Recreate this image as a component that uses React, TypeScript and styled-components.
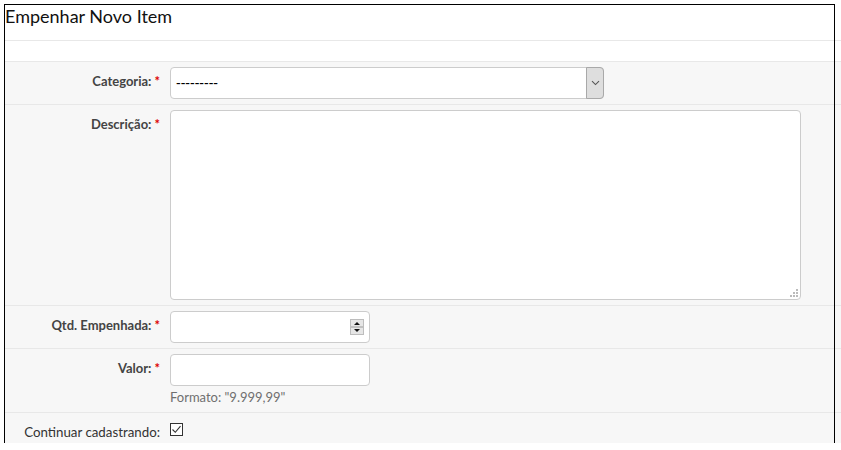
import React from "react";
import styled, { createGlobalStyle } from "styled-components";

const GlobalStyle = createGlobalStyle`
  html, body { margin: 0; padding: 0; background: #fff; overflow: hidden; }
  body { font-family: Lato, "Noto Sans", sans-serif; }
  *, *::before, *::after { box-sizing: border-box; }
`;

const Frame = styled.div`
  margin: 5px 0 0 5px;
  width: 829px;
  height: 438px;
  outline: 1px solid #000;
`;

const Sheet = styled.div`
  width: 836px;
`;

const Header = styled.h2`
  margin: 0;
  height: 36px;
  border-bottom: 1px solid #e8e8e8;
  font-size: 18px;
  line-height: 22px;
  font-weight: 400;
  color: #111;
  background: #fff;
`;

const Spacer = styled.div`
  height: 21px;
  border-bottom: 1px solid #e8e8e8;
  background: #fff;
`;

const Row = styled.div<{ $last?: boolean }>`
  display: grid;
  grid-template-columns: 155px 1fr;
  column-gap: 10px;
  padding: 5px 0;
  background: #f7f7f7;
  border-bottom: ${(p) => (p.$last ? "none" : "1px solid #e8e8e8")};
`;

const Label = styled.label<{ $plain?: boolean }>`
  padding-top: 4px;
  font-size: ${(p) => (p.$plain ? "13.3px" : "13px")};
  line-height: 20px;
  font-weight: ${(p) => (p.$plain ? 400 : 700)};
  color: ${(p) => (p.$plain ? "#333" : "#444")};
  text-align: right;
  white-space: nowrap;
`;

const Required = styled.span`
  color: #d00;
  margin-left: 3px;
  font-weight: 700;
`;

const Control = styled.div`
  display: flex;
  flex-direction: column;
  align-items: flex-start;
`;

const SelectBox = styled.div`
  width: 434px;
  height: 32px;
  display: flex;
  align-items: center;
  background: #fff;
  border: 1px solid #ccc;
  border-radius: 4px;
`;

const SelectText = styled.span`
  flex: 1;
  padding-left: 5px;
  font-family: "Liberation Sans", Arial, sans-serif;
  font-size: 14px;
  color: #000;
`;

const ArrowBox = styled.span`
  align-self: stretch;
  width: 18px;
  margin: -1px -1px -1px 0;
  display: flex;
  align-items: center;
  justify-content: center;
  background: #dedede;
  border: 1px solid #a9a9a9;
  border-radius: 0 4px 4px 0;
`;

const TextAreaWrap = styled.div`
  position: relative;
  width: 631px;
  height: 190px;
`;

const TextArea = styled.textarea`
  display: block;
  width: 100%;
  height: 100%;
  background: #fff;
  border: 1px solid #ccc;
  border-radius: 4px;
  resize: none;
  outline: none;
`;

const Grip = styled.svg`
  position: absolute;
  right: 3px;
  bottom: 3px;
`;

const InputBox = styled.div`
  width: 200px;
  height: 32px;
  display: flex;
  align-items: center;
  justify-content: flex-end;
  background: #fff;
  border: 1px solid #ccc;
  border-radius: 4px;
  padding-right: 5px;
`;

const HelpText = styled.div`
  margin-top: 3px;
  padding-bottom: 1px;
  font-size: 13px;
  line-height: 17px;
  color: #6f6f6f;
`;

const CheckBox = styled.span`
  margin-top: 5px;
  width: 13px;
  height: 13px;
  display: flex;
  align-items: center;
  justify-content: center;
  background: #fff;
  border: 1px solid #333;
`;

export default function App() {
  return (
    <>
      <GlobalStyle />
      <Frame>
        <Sheet>
          <Header>Empenhar Novo Item</Header>
          <Spacer />
          <Row>
            <Label>
              Categoria:<Required>*</Required>
            </Label>
            <Control>
              <SelectBox>
                <SelectText>---------</SelectText>
                <ArrowBox>
                  <svg width="9" height="6" viewBox="0 0 9 6">
                    <path d="M1 1.2 L4.5 4.6 L8 1.2" fill="none" stroke="#555" strokeWidth="1.1" />
                  </svg>
                </ArrowBox>
              </SelectBox>
            </Control>
          </Row>
          <Row>
            <Label>
              Descrição:<Required>*</Required>
            </Label>
            <Control>
              <TextAreaWrap>
                <TextArea />
                <Grip width="9" height="8" viewBox="0 0 9 8">
                  <rect x="7" y="0" width="2" height="2" fill="#bbb" />
                  <rect x="4" y="3" width="2" height="2" fill="#bbb" />
                  <rect x="7" y="3" width="2" height="2" fill="#bbb" />
                  <rect x="1" y="6" width="2" height="2" fill="#bbb" />
                  <rect x="4" y="6" width="2" height="2" fill="#bbb" />
                  <rect x="7" y="6" width="2" height="2" fill="#bbb" />
                </Grip>
              </TextAreaWrap>
            </Control>
          </Row>
          <Row>
            <Label>
              Qtd. Empenhada:<Required>*</Required>
            </Label>
            <Control>
              <InputBox>
                <svg width="14" height="16" viewBox="0 0 14 16">
                  <rect x="0.5" y="0.5" width="13" height="15" fill="#e6e6e6" stroke="#bdbdbd" />
                  <line x1="1" y1="8" x2="13" y2="8" stroke="#9a9a9a" />
                  <path d="M4 6 L7 3 L10 6 Z" fill="#111" />
                  <path d="M4 10 L10 10 L7 13 Z" fill="#111" />
                </svg>
              </InputBox>
            </Control>
          </Row>
          <Row>
            <Label>
              Valor:<Required>*</Required>
            </Label>
            <Control>
              <InputBox />
              <HelpText>Formato: "9.999,99"</HelpText>
            </Control>
          </Row>
          <Row $last>
            <Label $plain>Continuar cadastrando:</Label>
            <Control>
              <CheckBox>
                <svg width="11" height="11" viewBox="0 0 11 11">
                  <path d="M1.5 5.5 L4.3 8.3 L9.5 2.2" fill="none" stroke="#333" strokeWidth="1.1" />
                </svg>
              </CheckBox>
            </Control>
          </Row>
        </Sheet>
      </Frame>
    </>
  );
}
